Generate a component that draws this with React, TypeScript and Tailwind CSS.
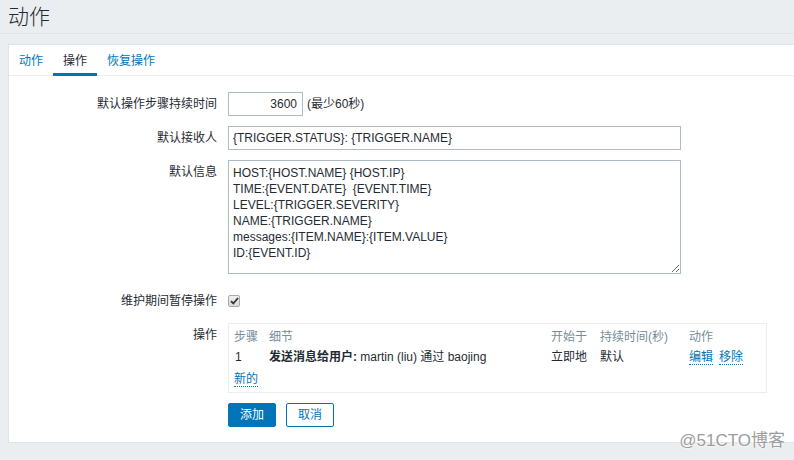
const font = { fontFamily: '"Liberation Sans", Arial, "Noto Sans CJK SC", sans-serif' };

const message = `HOST:{HOST.NAME} {HOST.IP}
TIME:{EVENT.DATE}  {EVENT.TIME}
LEVEL:{TRIGGER.SEVERITY}
NAME:{TRIGGER.NAME}
messages:{ITEM.NAME}:{ITEM.VALUE}
ID:{EVENT.ID}`;

const Label = ({ children, top }: { children: React.ReactNode; top?: boolean }) => (
    <div className={`w-[208px] shrink-0 text-right leading-4 ${top ? "pt-[4px]" : "self-center"}`}>{children}</div>
);

const DotLink = ({ children }: { children: React.ReactNode }) => (
    <a className="text-[#0275b8] border-b border-dotted border-[#0275b8] leading-[14px] cursor-pointer">{children}</a>
);

const App = () => {
    return (
        <div className="relative w-full min-h-[460px] bg-[#ebeef0] overflow-hidden text-[12px] text-[#1f2c33]" style={font}>
            <header className="h-[34px] flex items-center pl-2 border-b border-[#dfe4e7]">
                <h1 className="text-[21px] font-light leading-none">动作</h1>
            </header>

            <section className="mt-[10px] ml-2 bg-white border-y border-l border-[#dfe4e7]">
                <ul className="flex border-b border-[#ebeef0] h-[31px]">
                    <li className="h-[31px] px-[10px] pt-[3px] border-b-[3px] border-transparent flex items-center text-[#0275b8]">动作</li>
                    <li className="h-[31px] px-[10px] pt-[3px] border-b-[3px] border-[#0275b8] flex items-center">操作</li>
                    <li className="h-[31px] px-[10px] pt-[3px] border-b-[3px] border-transparent flex items-center text-[#0275b8]">恢复操作</li>
                </ul>

                <div className="flex flex-col pt-[16px] pb-[15px]">
                    <div className="flex gap-[11px] h-6">
                        <Label>默认操作步骤持续时间</Label>
                        <input
                            readOnly
                            defaultValue="3600"
                            className="w-[75px] h-6 border border-[#acbbc4] px-[5px] text-right text-[#1f2c33] outline-none"
                        />
                        <span className="self-center -ml-[7px]">(最少60秒)</span>
                    </div>

                    <div className="flex gap-[11px] h-6 mt-[10px]">
                        <Label>默认接收人</Label>
                        <input
                            readOnly
                            defaultValue="{TRIGGER.STATUS}: {TRIGGER.NAME}"
                            className="w-[453px] h-6 border border-[#acbbc4] px-[4px] text-[#1f2c33] outline-none"
                        />
                    </div>

                    <div className="flex gap-[11px] mt-[10px]">
                        <Label top>默认信息</Label>
                        <textarea
                            readOnly
                            defaultValue={message}
                            className="w-[453px] h-[114px] border border-[#acbbc4] px-[4px] py-[4px] leading-4 text-[#1f2c33] outline-none"
                        />
                    </div>

                    <div className="flex gap-[11px] h-6 mt-[15px]">
                        <Label>维护期间暂停操作</Label>
                        <span className="self-center w-3 h-3 rounded-[2px] border border-[#a9a9a9] bg-gradient-to-b from-[#f0f0f0] to-[#d9d9d9] flex items-center justify-center">
                            <svg width="9" height="8" viewBox="0 0 9 8">
                                <path d="M1 4.2 L3.3 6.5 L8 1" fill="none" stroke="#333" strokeWidth="1.8" />
                            </svg>
                        </span>
                    </div>

                    <div className="flex gap-[11px] mt-[10px]">
                        <Label top>操作</Label>
                        <div className="w-[539px] border border-[#ebeef0] pl-[5px] pt-[3px] pb-[3px]">
                            <div className="grid grid-cols-[35px_282px_49px_89px_1fr] h-5 items-center text-[#768d99]">
                                <span>步骤</span>
                                <span>细节</span>
                                <span>开始于</span>
                                <span>持续时间(秒)</span>
                                <span>动作</span>
                            </div>
                            <div className="grid grid-cols-[35px_282px_49px_89px_1fr] h-5 items-center">
                                <span className="pl-px">1</span>
                                <span>
                                    <b>发送消息给用户:</b> martin (liu) 通过 baojing
                                </span>
                                <span>立即地</span>
                                <span>默认</span>
                                <span className="flex gap-[6px]">
                                    <DotLink>编辑</DotLink>
                                    <DotLink>移除</DotLink>
                                </span>
                            </div>
                            <div className="h-5 mt-[2px] flex items-center">
                                <DotLink>新的</DotLink>
                            </div>
                        </div>
                    </div>

                    <div className="flex gap-[10px] mt-[10px] pl-[219px]">
                        <button className="w-12 h-6 rounded-[2px] bg-[#0275b8] border border-[#0275b8] text-white">添加</button>
                        <button className="w-12 h-6 rounded-[2px] bg-white border border-[#0275b8] text-[#0275b8]">取消</button>
                    </div>
                </div>
            </section>

            <div
                className="absolute right-[9px] top-[431px] text-[17px] leading-5 text-[#9c9c9c]"
                style={{ textShadow: "0 0 2px #fff, 0 0 2px #fff" }}
            >
                @51CTO博客
            </div>
        </div>
    );
};

export default App;
